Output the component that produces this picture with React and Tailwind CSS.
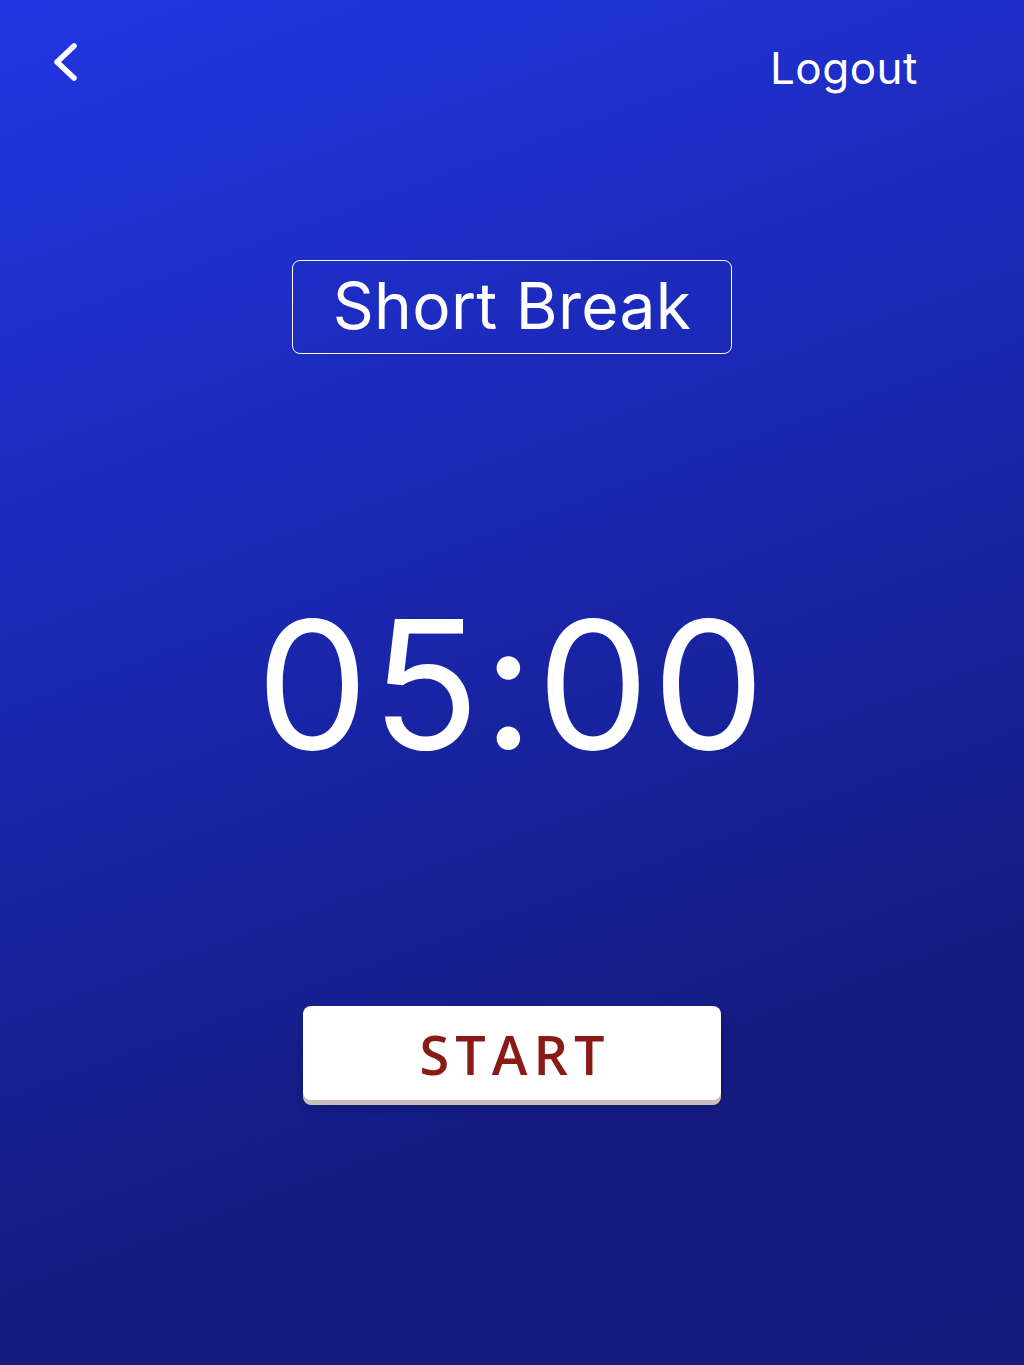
// Tela de timer — pausa curta
export default function App() {
    return (
        <div
            className="min-h-[1365px] w-full flex flex-col items-center bg-[linear-gradient(160deg,#2236e2_0%,#1a27b0_40%,#141c82_75%,#141c80_100%)] text-white"
            style={{ fontFamily: 'Inter, "Noto Sans", sans-serif' }}
        >
            {/* Header */}
            <div className="w-full flex items-start justify-between pl-[50px] pr-[106px] pt-[40px]">
                <button className="text-white">
                    <svg width="32" height="44" viewBox="0 0 32 44" fill="none" stroke="currentColor" strokeWidth="5.5" strokeLinecap="round" strokeLinejoin="round">
                        <polyline points="24,6 7,22 24,38" />
                    </svg>
                </button>
                <span className="text-[44px] leading-none mt-[6px] tracking-[0.5px]">Logout</span>
            </div>

            {/* Modo */}
            <div className="mt-[170px] w-[440px] h-[94px] border border-white rounded-[8px] flex items-center justify-center">
                <span className="text-[64px] leading-none tracking-[0.3px] -mt-[2px]">Short Break</span>
            </div>

            {/* Timer */}
            <div className="mt-[242px] text-[178px] leading-none tracking-[3px] font-normal">
                05:00
            </div>

            {/* Botão */}
            <button className="mt-[232px] w-[418px] h-[94px] bg-white rounded-[8px] flex items-center justify-center shadow-[0_5px_0_#c9c0be,0_6px_8px_rgba(0,0,0,0.25)]">
                <span
                    className="text-[54px] leading-none font-semibold tracking-[6px] text-[#8a1a16] mt-[2px] pl-[6px]"
                    style={{ fontFamily: '"Open Sans", sans-serif' }}
                >
                    START
                </span>
            </button>
        </div>
    );
}
